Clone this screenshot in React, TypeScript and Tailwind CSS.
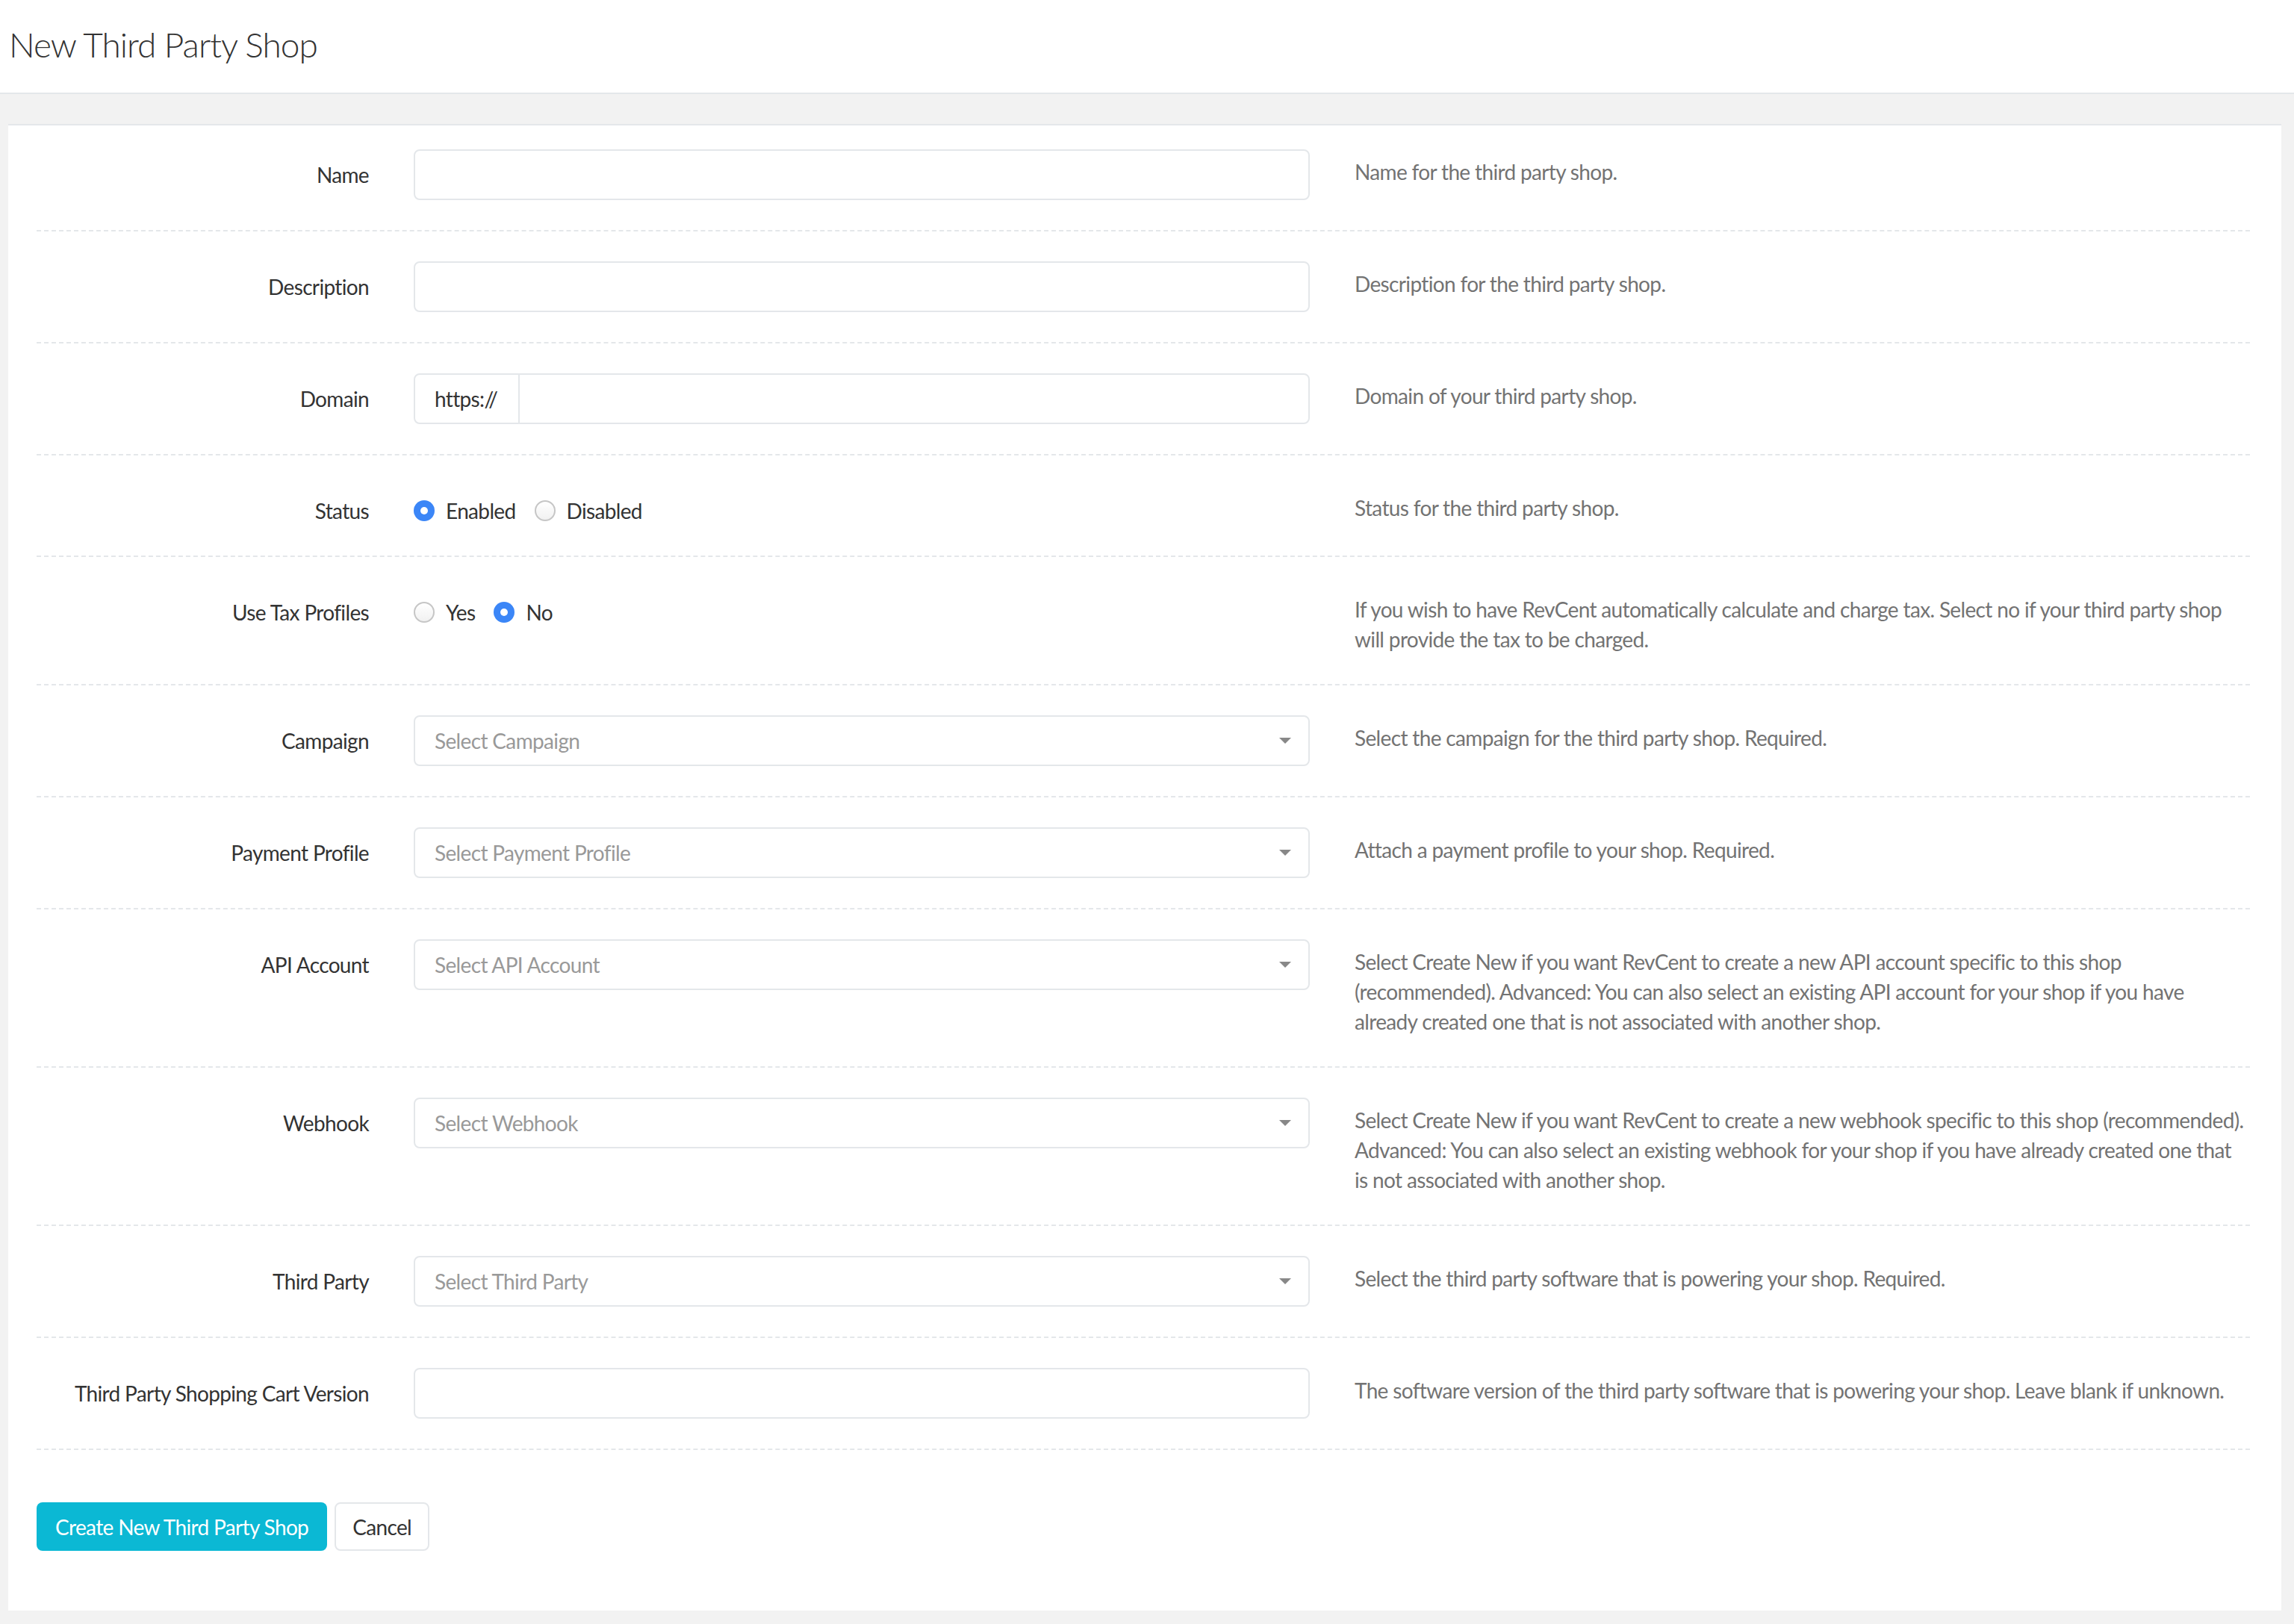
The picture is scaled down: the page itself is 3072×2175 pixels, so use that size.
import React from "react";

type RowProps = {
  label: string;
  children: React.ReactNode;
  help: React.ReactNode;
  last?: boolean;
};

function Row({ label, children, help, last }: RowProps) {
  return (
    <div
      className={
        "flex items-start border-b-2 border-dashed border-[#e4e7ea] pb-[40px] " +
        (last ? "mb-[70px]" : "mb-[40px]")
      }
    >
      <div className="w-[445px] shrink-0 pt-[14px] text-right text-[28px] leading-[40px] text-[#333]">
        {label}
      </div>
      <div className="ml-[60px] w-[1200px] shrink-0">{children}</div>
      <div className="ml-[60px] flex-1 pt-[10px] text-[28px] leading-[40px] text-[#737373] whitespace-nowrap">
        {help}
      </div>
    </div>
  );
}

function TextInput() {
  return (
    <div className="h-[68px] w-full rounded-[8px] border-2 border-[#e4e7ea] bg-white" />
  );
}

function SelectBox({ placeholder }: { placeholder: string }) {
  return (
    <div className="flex h-[68px] w-full items-center justify-between rounded-[8px] border-2 border-[#e4e7ea] bg-white pl-[26px] pr-[23px]">
      <span className="text-[28px] text-[#999]">{placeholder}</span>
      <svg width="16" height="8" viewBox="0 0 16 8">
        <path d="M0 0 L16 0 L8 8 Z" fill="#888" />
      </svg>
    </div>
  );
}

function Radio({ checked, label, first }: { checked: boolean; label: string; first?: boolean }) {
  return (
    <label className={"flex items-center " + (first ? "" : "ml-[25px]")}>
      {checked ? (
        <span className="flex h-[28px] w-[28px] items-center justify-center rounded-full bg-[#3b86f7]">
          <span className="h-[10px] w-[10px] rounded-full bg-white" />
        </span>
      ) : (
        <span className="h-[28px] w-[28px] rounded-full border-2 border-[#c6c6c6] bg-gradient-to-b from-white to-[#f1f1f1]" />
      )}
      <span className="ml-[15px] text-[28px] leading-[40px] text-[#333]">{label}</span>
    </label>
  );
}

export default function App() {
  return (
    <div className="min-h-screen bg-[#f2f2f2] font-['Lato',sans-serif] tracking-[-0.65px]">
      <header className="flex h-[126px] items-center border-b-2 border-[#e4e7ea] bg-white pb-[6px] pl-[12px]">
        <h1 className="text-[46px] font-light tracking-[-1px] text-[#333]">New Third Party Shop</h1>
      </header>
      <div className="pb-[18px] pl-[11px] pr-[17px] pt-[40px]">
        <div className="border-t-2 border-[#e4e7ea] bg-white pb-[80px] pl-[38px] pr-[42px] pt-[32px]">
          <Row label="Name" help="Name for the third party shop.">
            <TextInput />
          </Row>
          <Row label="Description" help="Description for the third party shop.">
            <TextInput />
          </Row>
          <Row label="Domain" help="Domain of your third party shop.">
            <div className="flex h-[68px] w-full rounded-[8px] border-2 border-[#e4e7ea] bg-white">
              <div className="flex w-[140px] items-center border-r-2 border-[#e4e7ea] pl-[26px] text-[28px] text-[#333]">
                https://
              </div>
              <div className="flex-1" />
            </div>
          </Row>
          <Row label="Status" help="Status for the third party shop.">
            <div className="flex items-center pt-[14px]">
              <Radio checked first label="Enabled" />
              <Radio checked={false} label="Disabled" />
            </div>
          </Row>
          <Row
            label="Use Tax Profiles"
            help={
              <>
                If you wish to have RevCent automatically calculate and charge tax. Select no if your third party shop
                <br />
                will provide the tax to be charged.
              </>
            }
          >
            <div className="flex items-center pt-[14px]">
              <Radio checked={false} first label="Yes" />
              <Radio checked label="No" />
            </div>
          </Row>
          <Row label="Campaign" help="Select the campaign for the third party shop. Required.">
            <SelectBox placeholder="Select Campaign" />
          </Row>
          <Row label="Payment Profile" help="Attach a payment profile to your shop. Required.">
            <SelectBox placeholder="Select Payment Profile" />
          </Row>
          <Row
            label="API Account"
            help={
              <>
                Select Create New if you want RevCent to create a new API account specific to this shop
                <br />
                (recommended). Advanced: You can also select an existing API account for your shop if you have
                <br />
                already created one that is not associated with another shop.
              </>
            }
          >
            <SelectBox placeholder="Select API Account" />
          </Row>
          <Row
            label="Webhook"
            help={
              <>
                Select Create New if you want RevCent to create a new webhook specific to this shop (recommended).
                <br />
                Advanced: You can also select an existing webhook for your shop if you have already created one that
                <br />
                is not associated with another shop.
              </>
            }
          >
            <SelectBox placeholder="Select Webhook" />
          </Row>
          <Row label="Third Party" help="Select the third party software that is powering your shop. Required.">
            <SelectBox placeholder="Select Third Party" />
          </Row>
          <Row
            last
            label="Third Party Shopping Cart Version"
            help="The software version of the third party software that is powering your shop. Leave blank if unknown."
          >
            <TextInput />
          </Row>
          <div className="flex items-center">
            <button className="h-[65px] rounded-[8px] bg-[#0bb8d4] px-[25px] text-[28px] text-white">
              Create New Third Party Shop
            </button>
            <button className="ml-[10px] h-[65px] rounded-[8px] border-2 border-[#e4e7ea] bg-white px-[22px] text-[28px] text-[#333]">
              Cancel
            </button>
          </div>
        </div>
      </div>
    </div>
  );
}
